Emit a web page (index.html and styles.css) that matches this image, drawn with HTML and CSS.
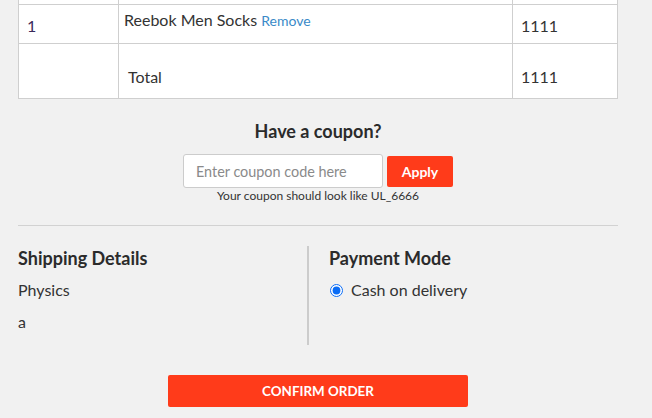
FILE: index.html
```html
<!DOCTYPE html>
<html>
<head>
<meta charset="utf-8">
<link rel="stylesheet" href="styles.css">
</head>
<body>
<div class="page">
  <table class="cart">
    <thead>
      <tr class="head"><th class="c1"></th><th class="c2"></th><th class="c3"></th></tr>
    </thead>
    <tbody>
      <tr class="item">
        <td class="num">1</td>
        <td class="prod">Reebok Men Socks <a class="remove" href="#">Remove</a></td>
        <td class="price">1111</td>
      </tr>
      <tr class="total">
        <td></td>
        <td class="tlabel">Total</td>
        <td class="price">1111</td>
      </tr>
    </tbody>
  </table>

  <div class="coupon">
    <h2 class="coupon-title">Have a coupon?</h2>
    <div class="coupon-form">
      <input class="coupon-input" type="text" placeholder="Enter coupon code here">
      <button class="apply">Apply</button>
    </div>
    <p class="hint">Your coupon should look like UL_6666</p>
  </div>

  <hr class="sep">

  <div class="details">
    <div class="ship">
      <h3 class="sec-title">Shipping Details</h3>
      <p class="line">Physics</p>
      <p class="line">a</p>
    </div>
    <div class="pay">
      <h3 class="sec-title">Payment Mode</h3>
      <label class="radio-row"><input type="radio" name="pm" checked> <span>Cash on delivery</span></label>
    </div>
  </div>

  <div class="confirm-wrap">
    <button class="confirm">CONFIRM ORDER</button>
  </div>
</div>
</body>
</html>
```

FILE: styles.css
```css
html, body {
  margin: 0;
  padding: 0;
  background: #f1f1f1;
}
body {
  font-family: Lato, "Liberation Sans", sans-serif;
  color: #333;
}
.page {
  width: 600px;
  padding: 0 18px;
}
.cart {
  width: 600px;
  border-collapse: collapse;
  background: #fff;
  margin-top: -36px;
  font-size: 16px;
  color: #333;
}
.cart th, .cart td {
  border: 1px solid #cfcfcf;
  text-align: left;
  font-weight: normal;
}
.head th {
  height: 39px;
  padding: 0;
}
.c1 { width: 99px; }
.c2 { width: 393px; }
.c3 { width: 104px; }
.item td {
  height: 38px;
  padding: 0 8px;
  vertical-align: middle;
  line-height: 20px;
}
.item .prod {
  height: 33px;
  padding: 5px 5px 0;
  vertical-align: top;
}
.item .num, .item .price { padding-top: 4px; height: 34px; }
.num { color: #3b2a5a; }
.remove {
  color: #3a8ac8;
  font-size: 14px;
  text-decoration: none;
}
.total td {
  height: 43px;
  padding: 0 8px 11px;
  vertical-align: bottom;
  line-height: 20px;
}
.total .tlabel { padding-left: 9px; }
.price { padding-left: 8px; }

.coupon {
  display: flex;
  flex-direction: column;
  align-items: center;
  padding-top: 21px;
}
.coupon-title {
  margin: 0;
  font-size: 18px;
  font-weight: bold;
  color: #2b2b2b;
  line-height: 22px;
}
.coupon-form {
  display: flex;
  align-items: center;
  gap: 4px;
  margin-top: 12px;
}
.coupon-input {
  box-sizing: border-box;
  width: 200px;
  height: 34px;
  border: 1px solid #cccccc;
  border-radius: 3px;
  background: #fff;
  padding: 0 12px;
  font-family: inherit;
  font-size: 14.4px;
  color: #333;
  outline: none;
}
.coupon-input::placeholder { color: #8a8a8a; }
.apply {
  box-sizing: border-box;
  width: 66px;
  height: 31px;
  border: none;
  border-radius: 2px;
  background: #ff3b1a;
  color: #fff;
  font-family: inherit;
  font-size: 14px;
  font-weight: bold;
  padding: 0;
}
.hint {
  margin: 1px 0 0;
  font-size: 12px;
  color: #333;
  line-height: 14px;
}
.sep {
  margin: 22px 0 0;
  border: none;
  border-top: 1px solid #d2d2d2;
  height: 0;
}
.details {
  display: flex;
  margin-top: 20px;
}
.ship {
  width: 289px;
  border-right: 2px solid #cccccc;
  height: 99px;
}
.pay {
  padding-left: 20px;
}
.sec-title {
  margin: 0;
  font-size: 18px;
  font-weight: bold;
  color: #2b2b2b;
  line-height: 24px;
}
.line {
  margin: 9px 0 0;
  font-size: 16px;
  line-height: 22px;
  color: #333;
}
.line + .line { margin-top: 10px; }
.radio-row {
  display: flex;
  align-items: center;
  margin-top: 9px;
  font-size: 16px;
  line-height: 22px;
  color: #333;
}
.radio-row input {
  margin: 0 8px 0 1px;
  width: 13px;
  height: 13px;
  accent-color: #0a6cf5;
}
.confirm-wrap {
  display: flex;
  justify-content: center;
  margin-top: 30px;
}
.confirm {
  width: 300px;
  height: 32px;
  border: none;
  border-radius: 2px;
  background: #ff3b1a;
  color: #fff;
  font-family: inherit;
  font-size: 13.4px;
  font-weight: bold;
}
```
